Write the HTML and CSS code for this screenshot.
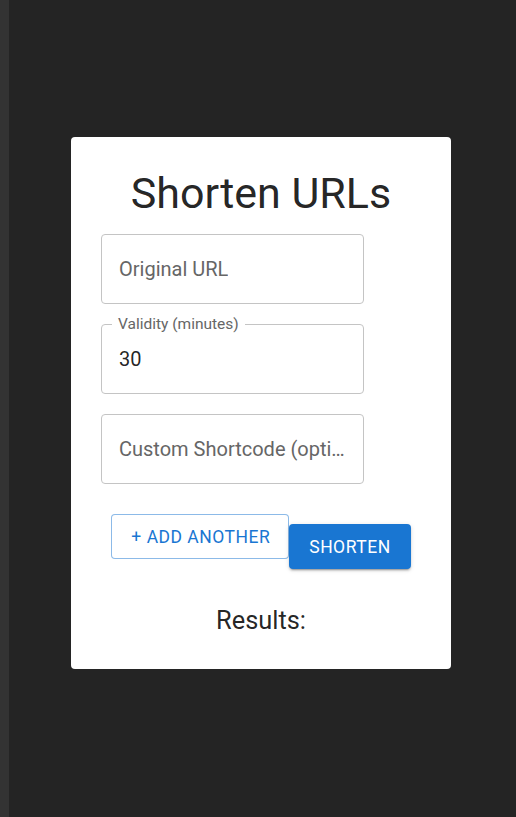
FILE: index.html
```html
<!DOCTYPE html>
<html lang="en">
<head>
<meta charset="utf-8">
<title>Shorten URLs</title>
<link rel="stylesheet" href="styles.css">
</head>
<body>
<div class="rail"></div>
<main class="stage">
  <section class="card">
    <h1 class="title">Shorten URLs</h1>
    <div class="fields">
      <div class="field">
        <span class="placeholder">Original URL</span>
      </div>
      <div class="field">
        <span class="float-label">Validity (minutes)</span>
        <span class="value">30</span>
      </div>
      <div class="field">
        <span class="placeholder">Custom Shortcode (optional)</span>
      </div>
    </div>
    <div class="actions">
      <button class="btn btn-outlined">+ Add Another</button>
      <button class="btn btn-contained">Shorten</button>
    </div>
    <h2 class="results">Results:</h2>
  </section>
</main>
</body>
</html>
```
FILE: styles.css
```css
html, body {
  margin: 0;
  height: 100%;
}
body {
  display: flex;
  background: #242424;
  font-family: Roboto, "Liberation Sans", Arial, sans-serif;
}
.rail {
  width: 9px;
  flex: none;
  background: #333333;
}
.stage {
  flex: 1;
  display: flex;
  justify-content: center;
  align-items: flex-start;
  padding-top: 137px;
}
.card {
  box-sizing: border-box;
  width: 380px;
  height: 532px;
  background: #ffffff;
  border-radius: 4px;
  padding: 30px 30px 0;
  margin-left: -3px;
}
.title {
  margin: 0;
  text-align: center;
  font-weight: 400;
  font-size: 43px;
  line-height: 52px;
  color: rgba(0, 0, 0, 0.87);
}
.fields {
  margin-top: 15px;
  display: flex;
  flex-direction: column;
  gap: 20px;
}
.field {
  position: relative;
  box-sizing: border-box;
  width: 263px;
  height: 70px;
  border: 1px solid #c4c4c4;
  border-radius: 4px;
  padding: 0 17px;
  display: flex;
  align-items: center;
  font-size: 20px;
  line-height: 24px;
  padding-bottom: 1px;
}
.placeholder {
  color: #666666;
  white-space: nowrap;
  overflow: hidden;
  text-overflow: ellipsis;
}
.value {
  color: rgba(0, 0, 0, 0.87);
}
.float-label {
  position: absolute;
  left: 10px;
  top: -10px;
  padding: 0 6px;
  background: #ffffff;
  font-size: 15.5px;
  line-height: 18px;
  color: #666666;
}
.actions {
  margin-top: 30px;
  display: flex;
  justify-content: center;
  align-items: flex-start;
  margin-left: -30px;
  margin-right: -30px;
}
.btn {
  font-family: inherit;
  font-size: 17.5px;
  font-weight: 400;
  text-transform: uppercase;
  letter-spacing: 0.5px;
  border-radius: 4px;
  height: 45px;
  box-sizing: border-box;
  cursor: pointer;
}
.btn-outlined {
  background: #ffffff;
  color: #1976d2;
  border: 1px solid rgba(25, 118, 210, 0.5);
  padding: 0 18px 0 19px;
}
.btn-contained {
  margin-top: 10px;
  background: #1976d2;
  color: #ffffff;
  border: none;
  padding: 0 20px;
  box-shadow: 0 3px 1px -2px rgba(0,0,0,0.2), 0 2px 2px 0 rgba(0,0,0,0.14), 0 1px 5px 0 rgba(0,0,0,0.12);
}
.results {
  margin: 35px 0 0;
  text-align: center;
  font-weight: 400;
  font-size: 25.4px;
  line-height: 32px;
  color: rgba(0, 0, 0, 0.87);
}
```
